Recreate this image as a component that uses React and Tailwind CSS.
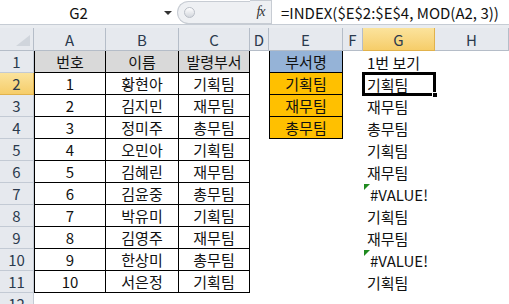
import React from "react";

const FONT = "font-['Noto_Sans_CJK_KR',sans-serif]";

const COLS = [
  { k: "A", w: 72 },
  { k: "B", w: 73 },
  { k: "C", w: 71 },
  { k: "D", w: 19 },
  { k: "E", w: 74 },
  { k: "F", w: 20 },
  { k: "G", w: 72 },
  { k: "H", w: 74 },
];

const PEOPLE = [
  [1, "황현아", "기획팀"],
  [2, "김지민", "재무팀"],
  [3, "정미주", "총무팀"],
  [4, "오민아", "기획팀"],
  [5, "김혜린", "재무팀"],
  [6, "김윤중", "총무팀"],
  [7, "박유미", "기획팀"],
  [8, "김영주", "재무팀"],
  [9, "한상미", "총무팀"],
  [10, "서은정", "기획팀"],
];

const DEPTS = ["기획팀", "재무팀", "총무팀"];
const RESULT = ["기획팀", "재무팀", "총무팀", "기획팀", "재무팀", "#VALUE!", "기획팀", "재무팀", "#VALUE!", "기획팀"];

function FormulaBar() {
  return (
    <div className="flex h-[25px] border-b border-[#c6ccd4] bg-white">
      <div className="relative flex w-[177px] items-center justify-center text-[15px] text-[#111]">
        <span className="pr-[20px]">G2</span>
        <span className="absolute right-[5px] top-[11px] h-0 w-0 border-x-[4px] border-t-[4px] border-x-transparent border-t-[#333]" />
      </div>
      <div className="flex w-[73px] items-center">
        <div className="flex h-[23px] w-full items-center rounded-l-full border border-r-0 border-[#c7ccd3] bg-[#eef0f3] pl-[6px]">
          <span className="h-[11px] w-[11px] rounded-full border border-[#b9bec6] bg-gradient-to-b from-[#ffffff] to-[#d3d7dd]" />
        </div>
      </div>
      <div className="flex w-[22px] items-center justify-center border-y border-r border-[#c7ccd3] bg-[#eef0f3] font-['Liberation_Serif',serif] text-[14px] italic text-[#333]">
        <span className="tracking-[-1px]">fx</span>
      </div>
      <div className="flex flex-1 items-center pl-[9px] text-[15px] text-[#111]">
        =INDEX($E$2:$E$4, MOD(A2, 3))
      </div>
    </div>
  );
}

function ColHeader() {
  return (
    <>
      <div className="relative h-[23px] border-b border-r border-[#b5bdc8] bg-[#e6e9ee]">
        <svg className="absolute bottom-[4px] right-[3px]" width="14" height="11" viewBox="0 0 14 11">
          <polygon points="14,0 14,11 0,11" fill="#d0d5dc" />
        </svg>
      </div>
      {COLS.map((c) => (
        <div
          key={c.k}
          className={`flex h-[23px] items-center justify-center border-b border-r text-[15px] ${
            c.k === "G"
              ? "border-[#e1b24c] bg-gradient-to-b from-[#fbe39c] to-[#f6cd69] text-[#2b3a4d]"
              : "border-[#b5bdc8] bg-[#e6e9ee] text-[#2b3a4d]"
          }`}
        >
          {c.k}
        </div>
      ))}
    </>
  );
}

function Row({ r }) {
  const inTable = r <= 11;
  const head = r === 1;
  const p = PEOPLE[r - 2];
  const abc = head ? ["번호", "이름", "발령부서"] : p ? [p[0], p[1], p[2]] : null;
  const eText = r === 1 ? "부서명" : r <= 4 ? DEPTS[r - 2] : null;
  const gText = r === 1 ? "1번 보기" : r <= 11 ? RESULT[r - 2] : null;
  const isErr = gText === "#VALUE!";
  const tcell = `flex h-[22px] items-center justify-center border-b border-r border-black ${head ? "bg-[#d9d9d9]" : "bg-white"}`;

  return (
    <>
      <div
        className={`flex h-[22px] items-center justify-center border-b border-r text-[15px] ${
          r === 2
            ? "border-[#e1b24c] bg-gradient-to-b from-[#fbe39c] to-[#f6cd69] text-[#2b3a4d]"
            : "border-[#c3cad4] bg-[#e6e9ee] text-[#2b3a4d]"
        }`}
      >
        {r}
      </div>
      {inTable && abc ? (
        <>
          <div className={`${tcell} border-l`}>{abc[0]}</div>
          <div className={tcell}>{abc[1]}</div>
          <div className={tcell}>{abc[2]}</div>
        </>
      ) : (
        <>
          <div className="h-[22px]" />
          <div className="h-[22px]" />
          <div className="h-[22px]" />
        </>
      )}
      <div className="h-[22px]" />
      {eText ? (
        <div
          className={`flex h-[22px] items-center justify-center border-b border-l border-r border-black ${
            r === 1 ? "bg-[#95b3d7]" : "bg-[#ffc000]"
          }`}
        >
          {eText}
        </div>
      ) : (
        <div className="h-[22px]" />
      )}
      <div className="h-[22px]" />
      <div className={`relative flex h-[22px] items-center ${isErr ? "justify-center" : "pl-[4px]"}`}>
        {isErr && (
          <svg className="absolute left-[1px] top-[1px]" width="6" height="6" viewBox="0 0 6 6">
            <polygon points="0,0 6,0 0,6" fill="#1f8a1f" />
          </svg>
        )}
        {gText}
        {r === 2 && (
          <>
            <span className="absolute -bottom-[1px] -left-[1px] -right-[1px] -top-[1px] border-[3px] border-black" />
            <span className="absolute -bottom-[3px] -right-[3px] h-[6px] w-[6px] border border-white bg-black" />
          </>
        )}
      </div>
      <div className="h-[22px]" />
    </>
  );
}

export default function App() {
  const rows = Array.from({ length: 12 }, (_, i) => i + 1);
  return (
    <div className={`h-[304px] w-[509px] overflow-hidden bg-white ${FONT} text-[15px] leading-none text-[#111]`}>
      <FormulaBar />
      <div className="h-[3px] bg-[#e9ecf0]" />
      <div className="grid grid-cols-[34px_72px_73px_71px_19px_74px_20px_72px_74px]">
        <ColHeader />
        {rows.map((r) => (
          <Row key={r} r={r} />
        ))}
      </div>
    </div>
  );
}
